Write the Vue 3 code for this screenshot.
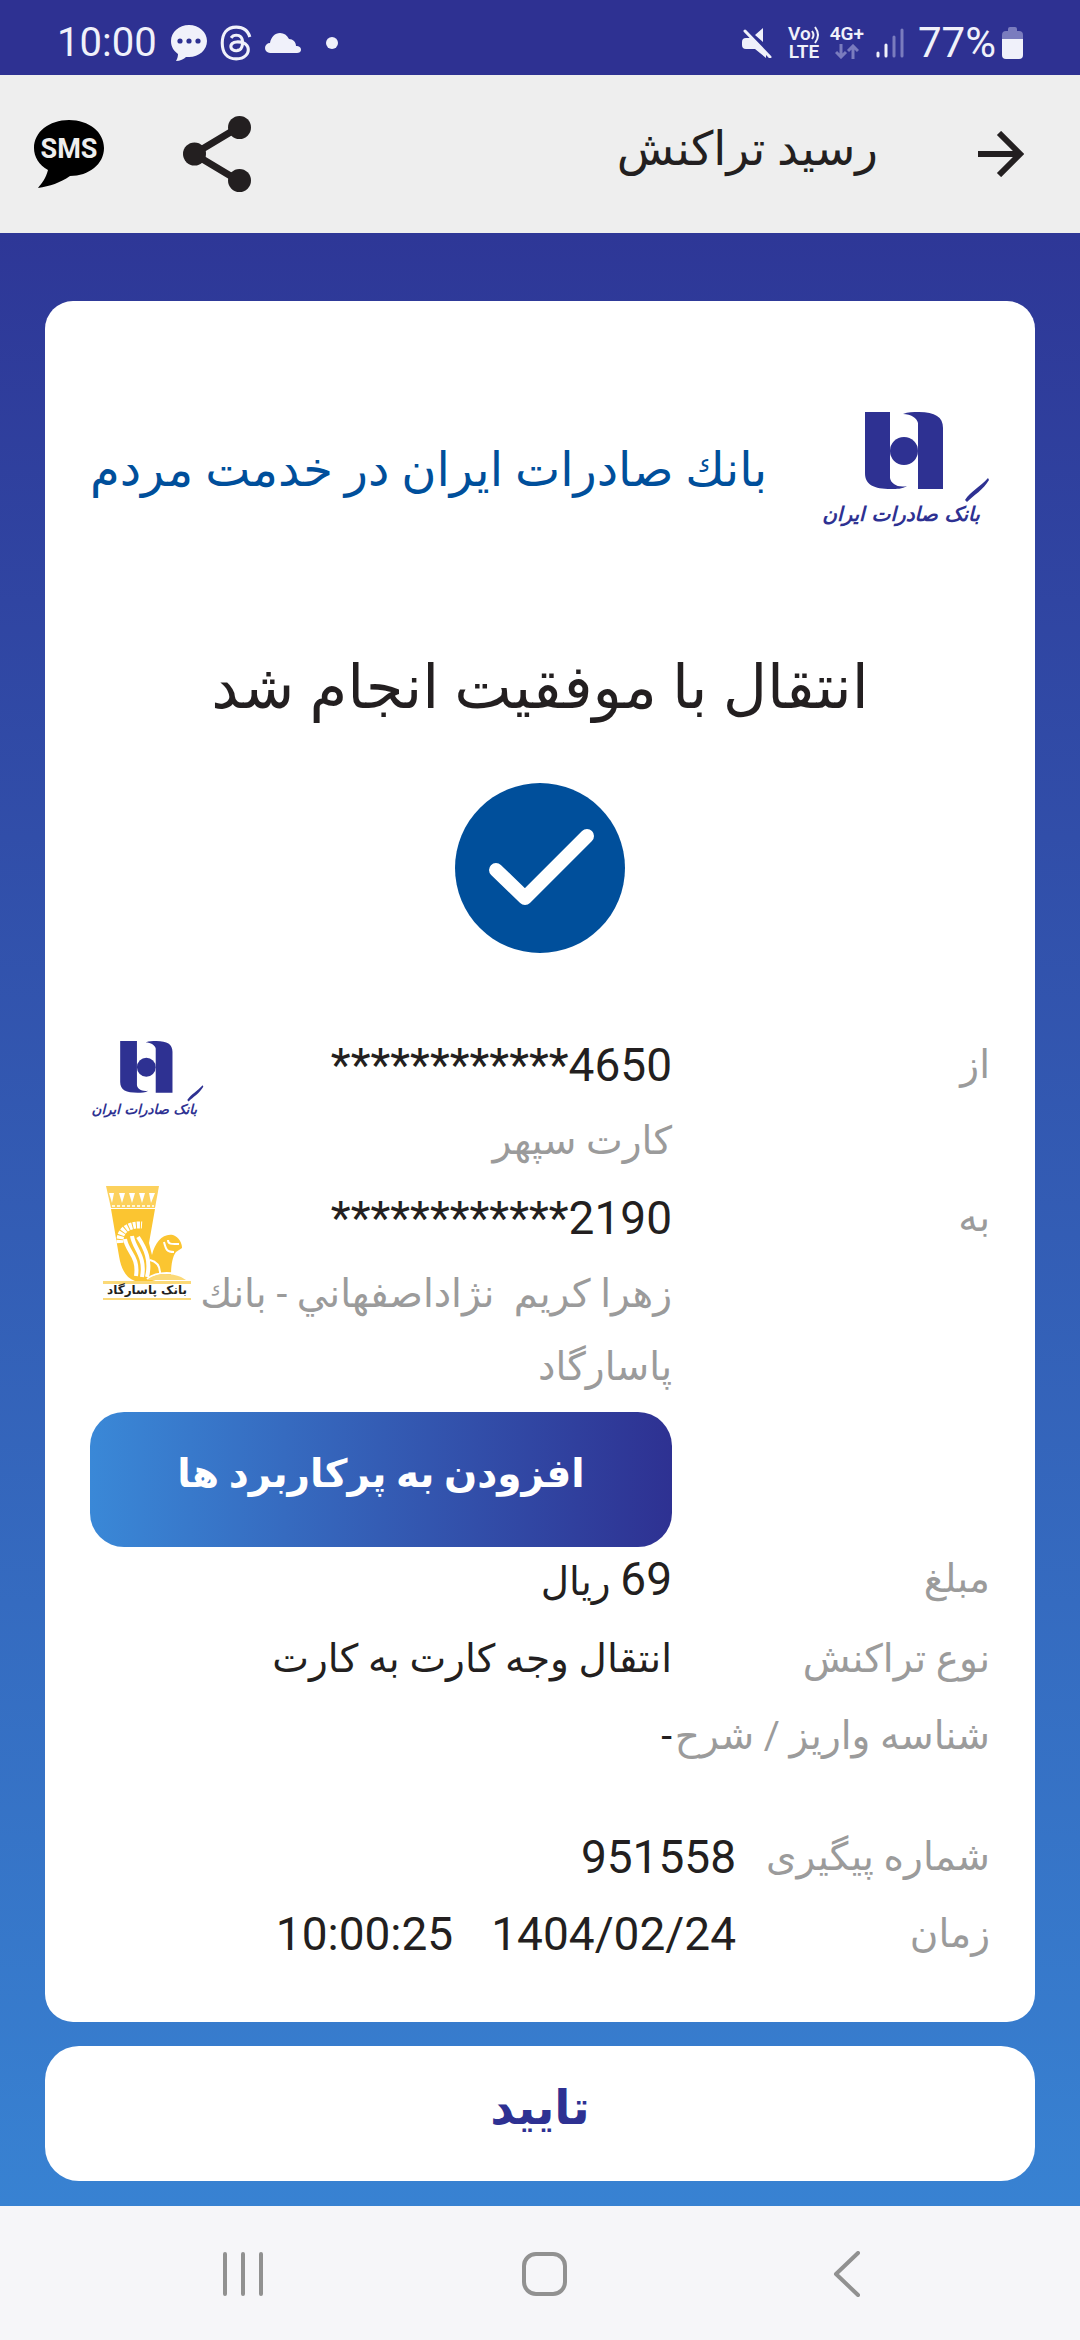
<script setup>
const accountRows = [
  {
    label: 'از',
    number: '************4650',
    owner: 'کارت سپهر',
    bank: 'saderat',
  },
  {
    label: 'به',
    number: '************2190',
    owner: 'زهرا کریم\u00a0 نژاداصفهاني - بانك پاسارگاد',
    bank: 'pasargad',
  },
]
</script>

<template>
  <div class="screen">
    <div class="status-bar">
      <span class="clock">10:00</span>
      <svg class="chat" viewBox="0 0 36 36" width="36" height="36" aria-hidden="true">
        <path fill="#f0f1fa" d="M18 0C8 0 0 7 0 16c0 6 3 10 7 13 0 3-1 5-2 7 4 0 8-2 10-4h3c10 0 18-7 18-16S28 0 18 0Z" />
        <circle cx="9" cy="16" r="2.6" fill="#2e3192" /><circle cx="18" cy="16" r="2.6" fill="#2e3192" /><circle cx="27" cy="16" r="2.6" fill="#2e3192" />
      </svg>
      <svg class="threads" viewBox="1 0 22 24" width="32" height="36" aria-hidden="true">
        <path fill="#f0f1fa" d="M12.186 24h-.007c-3.581-.024-6.334-1.205-8.184-3.509C2.35 18.44 1.5 15.586 1.472 12.01v-.017c.03-3.579.879-6.43 2.525-8.482C5.845 1.205 8.6.024 12.18 0h.014c2.746.02 5.043.725 6.826 2.098 1.677 1.29 2.858 3.13 3.509 5.467l-2.04.569c-1.104-3.96-3.898-5.984-8.304-6.015-2.91.022-5.11.936-6.54 2.717C4.307 6.504 3.616 8.914 3.589 12c.027 3.086.718 5.496 2.057 7.164 1.43 1.783 3.631 2.698 6.54 2.717 2.623-.02 4.358-.631 5.8-2.045 1.647-1.613 1.618-3.593 1.09-4.798-.31-.71-.873-1.3-1.634-1.75-.192 1.352-.622 2.446-1.284 3.272-.886 1.102-2.14 1.704-3.73 1.79-1.202.065-2.361-.218-3.259-.801-1.063-.689-1.685-1.74-1.752-2.964-.065-1.19.408-2.285 1.33-3.082.88-.76 2.119-1.207 3.583-1.291a13.853 13.853 0 0 1 3.02.142c-.126-.742-.375-1.332-.75-1.757-.513-.586-1.308-.883-2.359-.89h-.029c-.844 0-1.992.232-2.721 1.32L7.734 7.847c.98-1.454 2.568-2.256 4.478-2.256h.044c3.194.02 5.097 1.975 5.287 5.388.108.046.216.094.321.142 1.49.7 2.58 1.761 3.154 3.07.797 1.82.871 4.79-1.548 7.158-1.85 1.81-4.094 2.628-7.277 2.65Zm1.003-11.69c-.242 0-.487.007-.739.021-1.836.103-2.98.946-2.916 2.143.067 1.256 1.452 1.839 2.784 1.767 1.224-.065 2.818-.543 3.086-3.71a10.5 10.5 0 0 0-2.215-.221z" />
      </svg>
      <svg class="cloud" viewBox="0 0 36 20" width="36" height="20" aria-hidden="true">
        <path fill="#f0f1fa" d="M5 20a5 5 0 0 1 0-10C6 4 10 0 15 0c4 0 7 2 9 6 4 0 7 3 7 7 3 0 5 1 5 4 0 2-2 3-4 3Z" />
      </svg>
      <span class="dot"></span>
      <span class="spacer"></span>
      <svg class="mute" viewBox="0 0 30 30" width="30" height="30" aria-hidden="true">
        <path fill="#f0f1fa" d="M4 10h5l15 15v5l-11-9H4q-4 0-4-4v-3q0-4 4-4ZM13 7l8-7v14Z" />
        <path d="m3 3 25 26" stroke="#f0f1fa" stroke-width="3" stroke-linecap="round" />
      </svg>
      <span class="mini volte"><span class="vo">Vo<svg viewBox="0 0 9 18" width="9" height="18" aria-hidden="true"><path d="M1 5q3 4 0 8M4 1q6 8 0 16" fill="none" stroke="#f0f1fa" stroke-width="2" /></svg></span><span>LTE</span></span>
      <span class="mini network"><span>4G+</span>
        <svg viewBox="0 0 24 15" width="24" height="15" aria-hidden="true"><path d="M6 0v13M1 8l5 5 5-5M18 15V2M13 7l5-5 5 5" fill="none" stroke="#7a7cbe" stroke-width="3" /></svg>
      </span>
      <svg class="signal" viewBox="0 0 28 30" width="28" height="30" aria-hidden="true">
        <g stroke-width="3" stroke-linecap="round"><path d="M2 25v3M10 17v11" stroke="#f0f1fa" /><path d="M18 9v19M26 2v26" stroke="#7a7cbe" /></g>
      </svg>
      <span class="charge">77%</span>
      <svg class="battery" viewBox="0 0 21 32" width="21" height="32" aria-hidden="true">
        <path fill="#7a7cbe" d="M6 2q0-2 2-2h5q2 0 2 2v2h2q4 0 4 4v4H0V8q0-4 4-4h2Z" /><path fill="#f0f1fa" d="M0 12h21v16q0 4-4 4H4q-4 0-4-4Z" />
      </svg>
    </div>

    <header class="app-bar" dir="rtl">
      <button class="icon-button" type="button" aria-label="بازگشت">
        <svg viewBox="0 0 46 46" width="46" height="46"><path d="M0 23h42M21 2l21 21-21 21" fill="none" stroke="#231f20" stroke-width="6" /></svg>
      </button>
      <h1>رسید تراکنش</h1>
      <button class="icon-button" type="button" aria-label="اشتراک گذاری">
        <svg viewBox="0 0 68 76" width="68" height="76"><path d="M56 11 11 38l45 27" fill="none" stroke="#231f20" stroke-width="7" /><g fill="#231f20"><circle cx="56.500" cy="11.500" r="11.500" /><circle cx="11.500" cy="38" r="11.500" /><circle cx="56.500" cy="64.500" r="11.500" /></g></svg>
      </button>
      <button class="icon-button sms" type="button" aria-label="پیامک">
        <svg viewBox="0 0 70 68" width="70" height="68">
          <path d="M35 0C15 0 0 12 0 28c0 9 5 17 14 22-2 8-6 13-10 18 12-2 22-5 32-12 19 0 34-12 34-28S55 0 35 0Z" />
          <text x="35" y="38" text-anchor="middle" direction="ltr" class="sms-text">SMS</text>
        </svg>
      </button>
    </header>

    <main class="content" dir="rtl">
      <section class="card">
        <div class="brand">
          <svg class="brand-logo" viewBox="0 0 170 128">
            <g id="saderat">
              <g fill="#2e3192">
                <path d="M45 3h25v66c1 6 8 10 17 8-5 3-10 3-16 3-17 0-26-4-26-16Z" />
                <path d="M123 80H98V14C97 9 91 5 83 5c5-2 10-2 16-2 16 0 24 5 24 16Z" />
                <circle cx="84" cy="42" r="14" />
                <path d="M145 91c6-9 15-13 23-22l1 2c-6 10-15 15-22 22Z" />
              </g>
              <text x="81" y="112" text-anchor="middle" class="saderat-text">بانک صادرات ایران</text>
            </g>
          </svg>
          <p>بانك صادرات ايران در خدمت مردم</p>
        </div>

        <h2>انتقال با موفقیت انجام شد</h2>
        <svg class="check" viewBox="0 0 170 170" width="170" height="170" aria-hidden="true">
          <circle cx="85" cy="85" r="85" fill="#004f9b" />
          <path d="m41 87 29 28 62-62" fill="none" stroke="#fff" stroke-width="14" stroke-linecap="round" stroke-linejoin="round" />
        </svg>

        <dl class="details">
          <div v-for="row in accountRows" :key="row.bank" class="row">
            <dt>{{ row.label }}</dt>
            <dd class="account">
              <svg v-if="row.bank === 'saderat'" class="bank-logo" viewBox="0 0 170 128" width="114" height="90"><use href="#saderat" /></svg>
              <svg v-else class="bank-logo pasargad" viewBox="0 0 88 114" width="88" height="114">
                <path fill="#fcd15c" d="M3 0h53l-4 22H8Z" />
                <path fill="#fbc531" d="M8 23h44l-6 34 3 12c3-13 11-22 21-20 6 2 9 8 9 13l-6 4c-4 5-5 15-5 24l-19 5H32c-9-3-14-12-16-25Z" />
                <g fill="#fff"><path d="M6 7h5l-2 10ZM16 7h6l-3 10ZM26 7h6l-3 10ZM36 7h6l-3 10ZM46 7h6l-4 10Z" /></g>
                <path d="M9 20h42" stroke="#fff" stroke-width="1.500" stroke-dasharray="3 2" />
                <g fill="none" stroke="#fff">
                  <path d="M17 57c-1-12 8-19 22-18" stroke-width="7" stroke-dasharray="3 1" />
                  <path d="M22 53c2 13 14 17 11 37M29 50c2 13 14 20 10 41M35 51c8 12 13 24 9 40" stroke-width="4" />
                  <path d="M61 56c2 8 3 10 10 10M65 54c0 5 5 4 11 4M47 74c8 2 10 7 10 13M44 93c9-7 22-7 35-4" stroke-width="2" />
                </g>
                <path fill="#fbd977" d="M44 94c9-8 24-7 34-3l5 3ZM0 95h88v3H0ZM0 112h88v2H0Z" />
                <text x="44" y="108" text-anchor="middle" class="pasargad-text">بانک پاسارگاد</text>
              </svg>
              <span class="digits" dir="ltr">{{ row.number }}</span>
              <span class="owner">{{ row.owner }}</span>
              <button v-if="row.bank === 'pasargad'" class="favorite" type="button">افزودن به پرکاربرد ها</button>
            </dd>
          </div>
          <div class="row">
            <dt>مبلغ</dt>
            <dd><span class="digits">69</span> ریال</dd>
          </div>
          <div class="row spaced">
            <dt>نوع تراکنش</dt>
            <dd>انتقال وجه کارت به کارت</dd>
          </div>
          <div class="row spaced">
            <dt>شناسه واریز / شرح</dt>
            <dd>-</dd>
          </div>
        </dl>

        <dl class="details reference">
          <div class="row">
            <dt>شماره پیگیری</dt>
            <dd class="digits">951558</dd>
          </div>
          <div class="row spaced">
            <dt>زمان</dt>
            <dd class="digits time"><span>1404/02/24</span><span>10:00:25</span></dd>
          </div>
        </dl>
      </section>

      <button class="confirm" type="button">تایید</button>
    </main>

    <nav class="nav-bar" aria-label="ناوبری">
      <button type="button" aria-label="برنامه های اخیر">
        <svg viewBox="0 0 44 46" width="44" height="46"><path d="M3 3v40M21 3v40M39 3v40" stroke="#919191" stroke-width="4" stroke-linecap="round" /></svg>
      </button>
      <button type="button" aria-label="خانه">
        <svg viewBox="0 0 46 46" width="46" height="46"><rect x="2" y="3" width="41" height="40" rx="12" fill="none" stroke="#919191" stroke-width="4" /></svg>
      </button>
      <button type="button" aria-label="بازگشت">
        <svg viewBox="0 0 46 46" width="46" height="46"><path d="M34 2 12 23l22 21" fill="none" stroke="#919191" stroke-width="4" stroke-linecap="round" stroke-linejoin="round" /></svg>
      </button>
    </nav>
  </div>
</template>

<style>
body {
  margin: 0;
}
</style>

<style scoped>
.screen {
  display: flex;
  flex-direction: column;
  min-height: 100vh;
  font-family: Roboto, "DejaVu Sans", sans-serif;
  color: #231f20;
}

button {
  padding: 0;
  border: 0;
  background: none;
  font-family: inherit;
  color: inherit;
}

svg {
  flex: none;
  display: block;
}

.status-bar {
  display: flex;
  align-items: center;
  box-sizing: border-box;
  height: 75px;
  padding: 10px 57px 0;
  background: #2e3192;
  color: #f0f1fa;
}

.clock {
  font-size: 40px;
}

.charge {
  font-size: 42px;
}

.chat {
  margin-left: 14px;
}

.threads {
  margin-left: 13px;
}

.cloud {
  margin-left: 13px;
}

.dot {
  width: 12px;
  height: 12px;
  margin-left: 25px;
  border-radius: 50%;
  background: #f0f1fa;
}

.spacer {
  flex: 1;
}

.mini {
  display: flex;
  flex-direction: column;
  align-items: center;
  gap: 2px;
  font-size: 19px;
  font-weight: 600;
  line-height: 16px;
}

.volte {
  margin-left: 16px;
}

.vo {
  display: flex;
  height: 16px;
}

.network {
  margin-left: 10px;
}

.signal {
  margin: 0 14px 0 12px;
}

.battery {
  margin-left: 6px;
}

.app-bar {
  display: flex;
  align-items: center;
  height: 158px;
  padding: 0 56px 0 34px;
  background: #eee;
}

.app-bar h1 {
  flex: 1;
  margin: 0 100px 0 0;
  padding-bottom: 10px;
  font-size: 47px;
  font-weight: 400;
  line-height: 60px;
}

.sms {
  margin-right: 79px;
}

.sms-text {
  font: 700 27px Roboto, sans-serif;
  fill: #eee;
}

.content {
  flex: 1;
  display: flex;
  flex-direction: column;
  gap: 24px;
  padding: 68px 45px 25px;
  background: linear-gradient(#2e3797, #3882d2);
}

.card {
  padding: 108px 45px 56px;
  border-radius: 28px;
  background: #fff;
}

.brand {
  display: flex;
  align-items: center;
  justify-content: space-between;
}

.brand-logo {
  width: 170px;
  height: 128px;
}

.brand p {
  margin: 0;
  padding-bottom: 6px;
  font-size: 48px;
  line-height: 72px;
  color: #004f9b;
}

.saderat-text {
  font: italic 700 20px "DejaVu Sans", sans-serif;
  fill: #2e3192;
}

.card h2 {
  margin: 105px 0 51px;
  font-size: 61px;
  font-weight: 400;
  line-height: 90px;
  text-align: center;
}

.check {
  margin: 0 auto;
}

.details {
  margin: 80px 0 0;
  font-size: 39px;
  line-height: 64px;
}

.row {
  display: grid;
  grid-template-columns: 318fr 582fr;
}

.spaced {
  margin-top: 13px;
}

dt {
  min-width: 0;
  color: #9b9b9b;
  white-space: nowrap;
}

dd {
  min-width: 0;
  margin: 0;
}

.digits {
  font-size: 46px;
}

.account {
  position: relative;
  display: flex;
  flex-direction: column;
  align-items: flex-start;
  gap: 8px;
  padding-bottom: 8px;
}

.row:nth-child(2) .account {
  padding-bottom: 0;
}

.bank-logo {
  position: absolute;
  top: 4px;
  left: 0;
}

.pasargad {
  top: 0;
  left: 13px;
}

.pasargad-text {
  font: 700 12px "DejaVu Sans", sans-serif;
  fill: #231f20;
}

.owner {
  position: relative;
  line-height: 73px;
  color: #9b9b9b;
}

.favorite {
  align-self: stretch;
  height: 135px;
  padding-bottom: 12px;
  border-radius: 34px;
  background: linear-gradient(to left, #2e3192, #3a88d7);
  font-size: 39px;
  font-weight: 700;
  color: #fff;
}

.reference {
  margin-top: 57px;
}

.reference .row {
  grid-template-columns: 254fr 646fr;
}

.time {
  display: flex;
  gap: 38px;
}

.confirm {
  height: 135px;
  padding-bottom: 12px;
  border-radius: 34px;
  background: #fff;
  font-size: 47px;
  font-weight: 700;
  color: #2e3192;
}

.nav-bar {
  display: flex;
  align-items: center;
  justify-content: space-around;
  height: 135px;
  padding: 0 82px 0 94px;
  background: #f6f6f9;
}
</style>
